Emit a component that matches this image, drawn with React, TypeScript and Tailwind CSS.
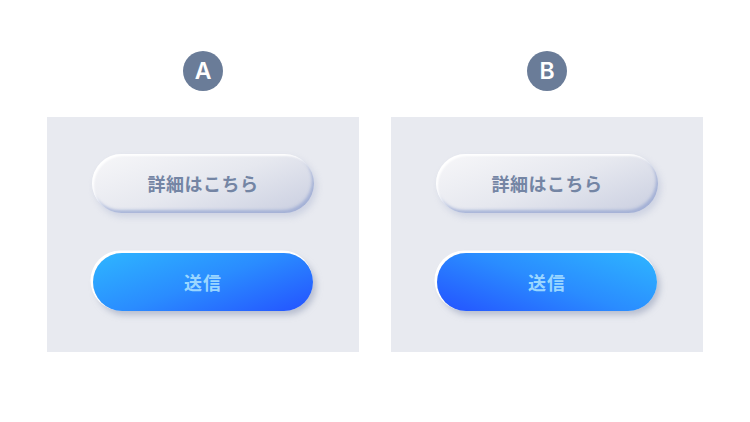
import React from "react";

const font = { fontFamily: '"Noto Sans CJK JP", "Noto Sans", sans-serif' };

function Panel({ label, reverse }: { label: string; reverse?: boolean }) {
  return (
    <div className="flex flex-col items-center w-[312px]">
      <div className="h-[40px] w-[40px] rounded-full bg-[#6a7c98] flex items-center justify-center text-white text-[23px] font-semibold leading-none mt-[51px]" style={{ fontFamily: 'Inter, "Liberation Sans", sans-serif' }}>
        {label}
      </div>
      <div className="mt-[26px] w-[312px] h-[235px] bg-[#e8eaf0] flex flex-col items-center pt-[37px] gap-[40px]">
        <div className="w-[222px] h-[59px] rounded-full flex items-center justify-center bg-[linear-gradient(160deg,#f7f7f9_0%,#e6e8ef_50%,#c9cee0_100%)] shadow-[inset_2px_2px_2px_rgba(255,255,255,0.95),inset_-2px_-3px_3px_rgba(150,165,210,0.75),3px_4px_6px_rgba(175,185,210,0.45)]">
          <span className="text-[18px] font-bold text-[#7485a4] tracking-[0.5px]" style={font}>詳細はこちら</span>
        </div>
        <div
          className={
            "w-[220px] h-[58px] rounded-full flex items-center justify-center shadow-[-1.5px_-1.5px_0_1px_#ffffff,3px_4px_6px_rgba(150,160,185,0.6)] " +
            (reverse
              ? "bg-[linear-gradient(200deg,#2eb6ff_0%,#2a8cff_50%,#2452ff_100%)]"
              : "bg-[linear-gradient(160deg,#2eb6ff_0%,#2a8cff_50%,#2452ff_100%)]")
          }
        >
          <span className="text-[18px] font-bold text-[#9ad6ff] tracking-[1px]" style={font}>送信</span>
        </div>
      </div>
    </div>
  );
}

export default function App() {
  return (
    <div className="w-[750px] h-[422px] bg-white flex justify-center gap-[32px]">
      <Panel label="A" />
      <Panel label="B" reverse />
    </div>
  );
}
